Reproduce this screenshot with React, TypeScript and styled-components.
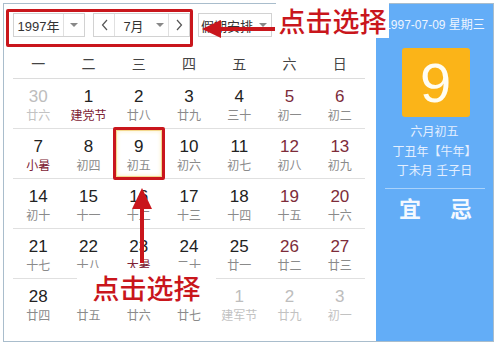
import React from 'react';
import styled, { createGlobalStyle } from 'styled-components';

const RED = '#c9161c';
const CJK = '"Liberation Sans", "Noto Sans CJK SC", sans-serif';

const GlobalStyle = createGlobalStyle`
    html, body {
        margin: 0;
        padding: 0;
        background: #fff;
    }
    body {
        font-family: ${CJK};
        color: #333;
    }
`;

const Page = styled.div`
    padding: 3px 0 0 3px;
`;

const Frame = styled.div`
    position: relative;
    display: flex;
    width: 491px;
    height: 339px;
    box-sizing: border-box;
    border: 1px solid #a9bdcc;
`;

const Main = styled.div`
    width: 372px;
    box-sizing: border-box;
    padding: 9px 11px 0 9px;
    display: flex;
    flex-direction: column;
`;

const Toolbar = styled.div`
    display: flex;
    height: 24px;
    gap: 8px;
`;

const SelectBox = styled.div<{ $width: number }>`
    display: flex;
    align-items: stretch;
    width: ${(p) => p.$width}px;
    box-sizing: border-box;
    border: 1px solid #d2d2d2;
    background: #fff;
    font-size: 13px;
    color: #333;
`;

const SelectText = styled.div`
    flex: 1;
    display: flex;
    align-items: center;
    justify-content: center;
`;

const Caret = styled.div`
    width: 20px;
    display: flex;
    align-items: center;
    justify-content: center;
    border-left: 1px solid #e0e0e0;
    &::after {
        content: '';
        border-left: 4px solid transparent;
        border-right: 4px solid transparent;
        border-top: 4px solid #888;
    }
`;

const CaretBare = styled(Caret)`
    border-left: none;
    width: 16px;
`;

const NavButton = styled.div<{ $side: 'left' | 'right' }>`
    width: 20px;
    display: flex;
    align-items: center;
    justify-content: center;
    ${(p) => (p.$side === 'left' ? 'border-right' : 'border-left')}: 1px solid #e0e0e0;
`;

const WeekHeader = styled.div`
    display: grid;
    grid-template-columns: repeat(7, 1fr);
    height: 31px;
    margin-top: 10px;
    border-bottom: 1px solid #dcdcdc;
    align-items: center;
    font-size: 14px;
    color: #444;
    text-align: center;
`;

const WeekRow = styled.div<{ $last?: boolean }>`
    display: grid;
    grid-template-columns: repeat(7, 1fr);
    height: 50px;
    box-sizing: border-box;
    border-bottom: ${(p) => (p.$last ? 'none' : '1px solid #e0e0e0')};
`;

type Tone = 'normal' | 'weekend' | 'other';

const Cell = styled.div<{ $selected?: boolean }>`
    position: relative;
    display: flex;
    flex-direction: column;
    align-items: center;
    padding-top: 8px;
    ${(p) =>
        p.$selected &&
        `
        &::after {
            content: '';
            position: absolute;
            left: -1px;
            right: -1px;
            top: -2px;
            bottom: -2px;
            border: 3px solid ${RED};
            border-radius: 2px;
            box-shadow: inset 0 0 0 1px #f3d88e, inset 0 0 4px 1px #fbeec4;
        }
    `}
`;

const DayNum = styled.div<{ $tone: Tone }>`
    font-family: "Liberation Sans", sans-serif;
    font-size: 17px;
    line-height: 20px;
    color: ${(p) => (p.$tone === 'other' ? '#bdbdbd' : p.$tone === 'weekend' ? '#7d2c3a' : '#222')};
`;

const Lunar = styled.div<{ $tone: Tone; $festival?: boolean }>`
    font-size: 12px;
    line-height: 16px;
    margin-top: 1px;
    color: ${(p) => (p.$tone === 'other' ? '#c2c2c2' : p.$festival ? '#7d2234' : '#8a8a8a')};
`;

const Side = styled.div`
    width: 117px;
    background: #63adf7;
    display: flex;
    flex-direction: column;
    align-items: center;
    padding-top: 13px;
    color: #fff;
`;

const DateLine = styled.div`
    font-size: 12px;
    line-height: 16px;
    white-space: nowrap;
    color: #eef5ff;
`;

const DayBox = styled.div`
    width: 68px;
    height: 69px;
    margin-top: 15px;
    margin-left: 2px;
    border-radius: 3px;
    background: #fbb418;
    display: flex;
    align-items: center;
    justify-content: center;
    font-family: "Liberation Sans", sans-serif;
    font-size: 56px;
    color: #fffdf2;
`;

const LunarInfo = styled.div`
    margin-top: 6px;
    font-size: 12px;
    line-height: 19.5px;
    text-align: center;
    color: #e4efff;
    white-space: nowrap;
`;

const SideDivider = styled.div`
    width: 100px;
    height: 1px;
    margin-top: 6px;
    background: rgba(255, 255, 255, 0.45);
`;

const Omen = styled.div`
    display: flex;
    gap: 29px;
    margin-top: 8px;
    margin-left: 2px;
    font-size: 22px;
    line-height: 26px;
    font-weight: bold;
    color: #f4f9ff;
`;

const HighlightBox = styled.div`
    position: absolute;
    left: 2px;
    top: 5px;
    width: 187px;
    height: 38px;
    box-sizing: border-box;
    border: 3px solid ${RED};
    border-radius: 2px;
    pointer-events: none;
`;

const Callout = styled.div<{ $left: number; $top: number; $width: number; $height: number }>`
    position: absolute;
    left: ${(p) => p.$left}px;
    top: ${(p) => p.$top}px;
    width: ${(p) => p.$width}px;
    height: ${(p) => p.$height}px;
    background: #fff;
    display: flex;
    align-items: center;
    justify-content: center;
    font-family: "Noto Sans CJK SC", sans-serif;
    font-size: 27px;
    font-weight: 500;
    color: ${RED};
    white-space: nowrap;
`;

const ArrowSvg = styled.svg<{ $left: number; $top: number }>`
    position: absolute;
    left: ${(p) => p.$left}px;
    top: ${(p) => p.$top}px;
    overflow: visible;
`;

const Chevron: React.FC<{ dir: 'left' | 'right' }> = ({ dir }) => (
    <svg width="7" height="12" viewBox="0 0 7 12">
        <path d={dir === 'left' ? 'M6 1 L1.5 6 L6 11' : 'M1 1 L5.5 6 L1 11'} fill="none" stroke="#555" strokeWidth="1.2" />
    </svg>
);

type Day = { d: number; l: string; tone?: Tone; fest?: boolean; sel?: boolean };

const weeks: Day[][] = [
    [
        { d: 30, l: '廿六', tone: 'other' },
        { d: 1, l: '建党节', fest: true },
        { d: 2, l: '廿八' },
        { d: 3, l: '廿九' },
        { d: 4, l: '三十' },
        { d: 5, l: '初一' },
        { d: 6, l: '初二' },
    ],
    [
        { d: 7, l: '小暑', fest: true },
        { d: 8, l: '初四' },
        { d: 9, l: '初五', sel: true },
        { d: 10, l: '初六' },
        { d: 11, l: '初七' },
        { d: 12, l: '初八' },
        { d: 13, l: '初九' },
    ],
    [
        { d: 14, l: '初十' },
        { d: 15, l: '十一' },
        { d: 16, l: '十二' },
        { d: 17, l: '十三' },
        { d: 18, l: '十四' },
        { d: 19, l: '十五' },
        { d: 20, l: '十六' },
    ],
    [
        { d: 21, l: '十七' },
        { d: 22, l: '十八' },
        { d: 23, l: '大暑', fest: true },
        { d: 24, l: '二十' },
        { d: 25, l: '廿一' },
        { d: 26, l: '廿二' },
        { d: 27, l: '廿三' },
    ],
    [
        { d: 28, l: '廿四' },
        { d: 29, l: '廿五' },
        { d: 30, l: '廿六' },
        { d: 31, l: '廿七' },
        { d: 1, l: '建军节', tone: 'other' },
        { d: 2, l: '廿九', tone: 'other' },
        { d: 3, l: '初一', tone: 'other' },
    ],
];

const weekdays = ['一', '二', '三', '四', '五', '六', '日'];

export default function App() {
    return (
        <Page>
            <GlobalStyle />
            <Frame>
                <Main>
                    <Toolbar>
                        <SelectBox $width={72}>
                            <SelectText>1997年</SelectText>
                            <Caret />
                        </SelectBox>
                        <SelectBox $width={97}>
                            <NavButton $side="left">
                                <Chevron dir="left" />
                            </NavButton>
                            <SelectText>7月</SelectText>
                            <CaretBare />
                            <NavButton $side="right">
                                <Chevron dir="right" />
                            </NavButton>
                        </SelectBox>
                        <SelectBox $width={74}>
                            <SelectText>假期安排</SelectText>
                            <CaretBare />
                        </SelectBox>
                    </Toolbar>
                    <WeekHeader>
                        {weekdays.map((w) => (
                            <div key={w}>{w}</div>
                        ))}
                    </WeekHeader>
                    {weeks.map((week, wi) => (
                        <WeekRow key={wi} $last={wi === weeks.length - 1}>
                            {week.map((day, di) => {
                                const tone: Tone = day.tone ?? (di >= 5 ? 'weekend' : 'normal');
                                return (
                                    <Cell key={di} $selected={day.sel}>
                                        <DayNum $tone={tone}>{day.d}</DayNum>
                                        <Lunar $tone={tone} $festival={day.fest}>
                                            {day.l}
                                        </Lunar>
                                    </Cell>
                                );
                            })}
                        </WeekRow>
                    ))}
                </Main>
                <Side>
                    <DateLine>1997-07-09 星期三</DateLine>
                    <DayBox>9</DayBox>
                    <LunarInfo>
                        六月初五
                        <br />
                        丁丑年【牛年】
                        <br />
                        丁未月 壬子日
                    </LunarInfo>
                    <SideDivider />
                    <Omen>
                        <span>宜</span>
                        <span>忌</span>
                    </Omen>
                </Side>

                <HighlightBox />
                <Callout $left={272} $top={-2} $width={113} $height={36}>
                    点击选择
                </Callout>
                <Callout $left={73} $top={264} $width={139} $height={38}>
                    点击选择
                </Callout>
                <ArrowSvg $left={198} $top={15} width="76" height="20" viewBox="0 0 76 20">
                    <polygon points="0,10 19,1 19,19" fill={RED} />
                    <rect x="17" y="8" width="56" height="4" fill={RED} />
                </ArrowSvg>
                <ArrowSvg $left={127} $top={184} width="22" height="76" viewBox="0 0 22 76">
                    <polygon points="11,0 1,21 21,21" fill={RED} />
                    <rect x="9" y="19" width="4" height="56" fill={RED} />
                </ArrowSvg>
            </Frame>
        </Page>
    );
}
